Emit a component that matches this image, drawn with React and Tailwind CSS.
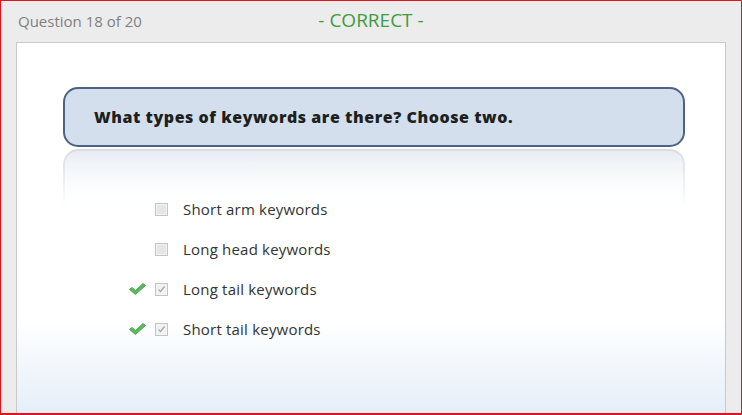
const options = [
  { label: 'Short arm keywords', checked: false },
  { label: 'Long head keywords', checked: false },
  { label: 'Long tail keywords', checked: true },
  { label: 'Short tail keywords', checked: true },
]

function GreenCheck() {
  return (
    <svg width="19" height="14" viewBox="0 0 19 14">
      <path d="M1.5 7.5 L4 5.5 L7.5 8.5 L15 1.5 L17.5 3.5 L7.5 12.5 Z" fill="#5cb85c" stroke="#4caa4c" strokeWidth="1" strokeLinejoin="round" />
    </svg>
  )
}

function Box({ checked }) {
  return (
    <div className="w-[13px] h-[13px] border border-[#c4c4c4] bg-[#f2f2f2] flex items-center justify-center">
      {checked ? (
        <svg width="9" height="9" viewBox="0 0 9 9">
          <path d="M1.5 4.5 L3.5 6.5 L7.5 1.5" fill="none" stroke="#a8a8a8" strokeWidth="1.3" />
        </svg>
      ) : (
        <div className="w-[9px] h-[9px] bg-[#e6e6e6]" />
      )}
    </div>
  )
}

export default function App() {
  return (
    <div
      className="w-[742px] h-[415px] bg-[#ececec] border border-[#e0141a] border-b-2 flex flex-col overflow-hidden"
      style={{ fontFamily: '"Open Sans", "Noto Sans", sans-serif' }}
    >
      <header className="h-[41px] relative flex items-center px-[17px]">
        <span className="text-[15px] text-[#808080]">Question 18 of 20</span>
        <span className="absolute left-0 right-0 top-[6px] text-center text-[19px] leading-[26px] text-[#3c9c3c]">- CORRECT -</span>
      </header>

      <main className="ml-[15px] mr-[15px] flex-1 bg-white border border-[#c9c9c9] border-b-0 bg-gradient-to-b from-white from-[75%] to-[#e5eef8] flex flex-col">
        <div className="ml-[46px] mr-[40px] mt-[44px] h-[60px] rounded-[15px] border-2 border-[#4d6383] bg-[#d3dfed] flex items-center px-[29px]">
          <p className="text-[16px] font-extrabold tracking-[0.55px] text-[#1f1f1f]">What types of keywords are there? Choose two.</p>
        </div>
        <div className="ml-[46px] mr-[40px] mt-[2px] h-[58px] rounded-t-[15px] border-2 border-b-0 border-[#d8dbe0] bg-gradient-to-b from-[#e6ebf2] to-white [mask-image:linear-gradient(to_bottom,black,transparent)]" />

        <ul className="mt-[-18px] flex flex-col">
          {options.map(o => (
            <li key={o.label} className="h-[40px] flex items-center">
              <div className="w-[138px] flex justify-end pr-[8px]">
                {o.checked ? <GreenCheck /> : null}
              </div>
              <Box checked={o.checked} />
              <span className="ml-[15px] text-[15px] tracking-[0.2px] text-[#333]">{o.label}</span>
            </li>
          ))}
        </ul>
      </main>
    </div>
  )
}
